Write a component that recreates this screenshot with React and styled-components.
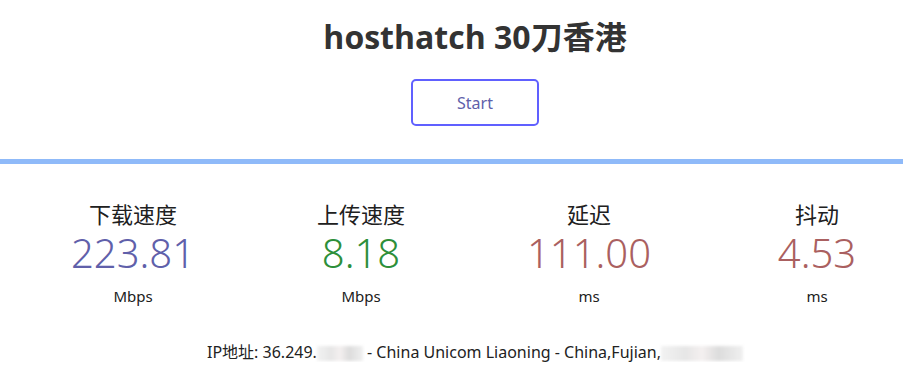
import React from "react";
import styled, { createGlobalStyle } from "styled-components";

const GlobalStyle = createGlobalStyle`
  html, body {
    margin: 0;
    padding: 0;
    background: #ffffff;
    overflow: hidden;
  }
  body {
    font-family: "Noto Sans", "Noto Sans CJK SC", sans-serif;
    color: #202020;
  }
`;

const Page = styled.div`
  width: 950px;
  padding-top: 16px;
  display: flex;
  flex-direction: column;
  align-items: center;
`;

const Title = styled.h1`
  margin: 0;
  font-size: 32px;
  line-height: 42px;
  font-weight: 700;
  color: #333333;
  font-family: "Open Sans", "Noto Sans CJK SC", sans-serif;
`;

const StartButton = styled.button`
  margin-top: 21px;
  width: 128px;
  height: 47px;
  border: 2px solid #6060ff;
  border-radius: 5px;
  background: #ffffff;
  color: #6060aa;
  font-family: "Noto Sans", sans-serif;
  font-size: 16px;
`;

const Divider = styled.div`
  margin-top: 33px;
  width: 100vw;
  align-self: flex-start;
  height: 5px;
  background: #8fbaf9;
`;

const Metrics = styled.div`
  margin-top: 34px;
  display: grid;
  grid-template-columns: repeat(4, 228px);
`;

const Metric = styled.div`
  display: flex;
  flex-direction: column;
  align-items: center;
`;

const Label = styled.div`
  font-size: 22px;
  line-height: 30px;
  color: #202020;
  font-family: "Noto Sans CJK SC", sans-serif;
`;

const Value = styled.div`
  margin-top: 2px;
  font-size: 40px;
  line-height: 46px;
  font-weight: 350;
  color: ${(p) => p.$color};
  font-family: "Noto Sans", sans-serif;
`;

const Unit = styled.div`
  margin-top: 10px;
  font-size: 15px;
  line-height: 20px;
  color: #202020;
`;

const IpInfo = styled.div`
  margin-top: 36px;
  font-size: 16px;
  line-height: 20px;
  color: #222222;
  display: flex;
  align-items: center;
  white-space: pre;
`;

const Blur = styled.span`
  display: inline-block;
  width: ${(p) => p.$w}px;
  height: 15px;
  margin-top: 3px;
  background: linear-gradient(90deg, #f2f2f2 0%, #e6e6e6 30%, #f4f0f0 50%, #dcdcdc 70%, #f0f0f0 100%);
  filter: blur(1.5px);
`;

const metrics = [
  { label: "下载速度", value: "223.81", unit: "Mbps", color: "#6060aa" },
  { label: "上传速度", value: "8.18", unit: "Mbps", color: "#2d8f3a" },
  { label: "延迟", value: "111.00", unit: "ms", color: "#aa6060" },
  { label: "抖动", value: "4.53", unit: "ms", color: "#aa6060" },
];

export default function App() {
  return (
    <>
      <GlobalStyle />
      <Page>
        <Title>hosthatch 30刀香港</Title>
        <StartButton>Start</StartButton>
        <Divider />
        <Metrics>
          {metrics.map((m) => (
            <Metric key={m.label}>
              <Label>{m.label}</Label>
              <Value $color={m.color}>{m.value}</Value>
              <Unit>{m.unit}</Unit>
            </Metric>
          ))}
        </Metrics>
        <IpInfo>
          IP地址: 36.249.<Blur $w={46} /> - China Unicom Liaoning - China,Fujian,<Blur $w={82} />
        </IpInfo>
      </Page>
    </>
  );
}
